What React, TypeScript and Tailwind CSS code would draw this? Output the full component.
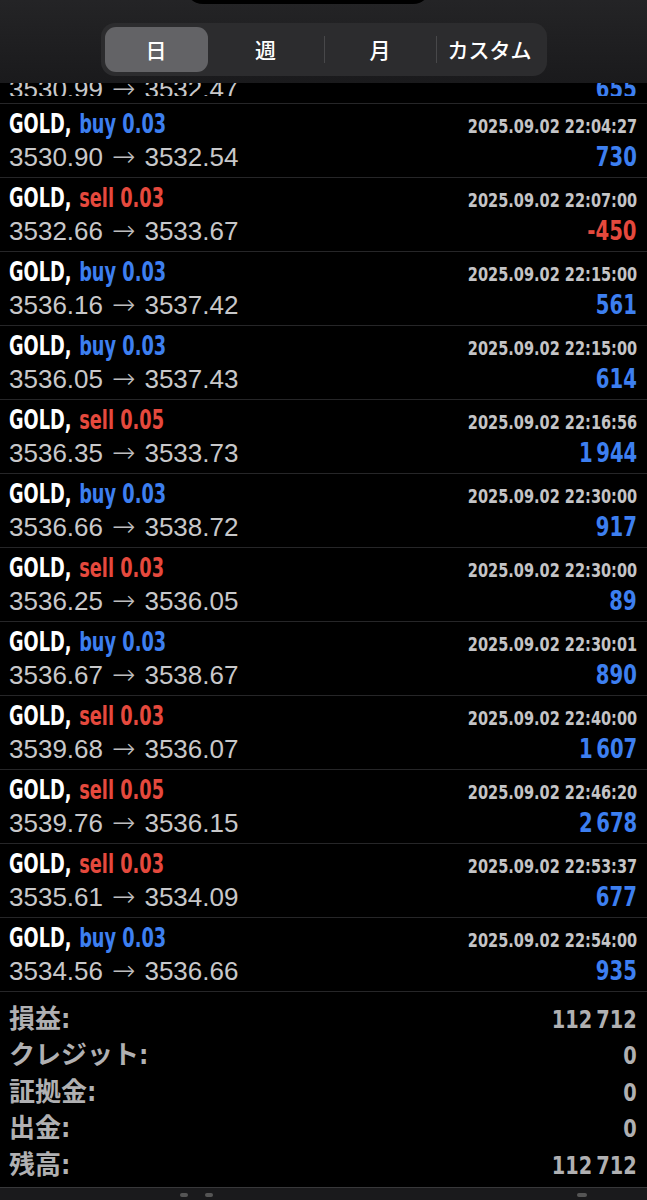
import React from "react";

const cond = {
  fontFamily:
    "'Liberation Sans Narrow', 'DejaVu Sans Condensed', 'Noto Sans CJK JP', sans-serif",
};
const thin = { fontFamily: "'Liberation Sans', Arial, sans-serif" };
const arrow = { fontFamily: "'DejaVu Sans', sans-serif" };

type Deal = {
  side: "buy" | "sell";
  lot: string;
  time: string;
  from: string;
  to: string;
  profit: string;
};

const deals: Deal[] = [
  { side: "buy", lot: "0.03", time: "22:04:27", from: "3530.90", to: "3532.54", profit: "730" },
  { side: "sell", lot: "0.03", time: "22:07:00", from: "3532.66", to: "3533.67", profit: "-450" },
  { side: "buy", lot: "0.03", time: "22:15:00", from: "3536.16", to: "3537.42", profit: "561" },
  { side: "buy", lot: "0.03", time: "22:15:00", from: "3536.05", to: "3537.43", profit: "614" },
  { side: "sell", lot: "0.05", time: "22:16:56", from: "3536.35", to: "3533.73", profit: "1 944" },
  { side: "buy", lot: "0.03", time: "22:30:00", from: "3536.66", to: "3538.72", profit: "917" },
  { side: "sell", lot: "0.03", time: "22:30:00", from: "3536.25", to: "3536.05", profit: "89" },
  { side: "buy", lot: "0.03", time: "22:30:01", from: "3536.67", to: "3538.67", profit: "890" },
  { side: "sell", lot: "0.03", time: "22:40:00", from: "3539.68", to: "3536.07", profit: "1 607" },
  { side: "sell", lot: "0.05", time: "22:46:20", from: "3539.76", to: "3536.15", profit: "2 678" },
  { side: "sell", lot: "0.03", time: "22:53:37", from: "3535.61", to: "3534.09", profit: "677" },
  { side: "buy", lot: "0.03", time: "22:54:00", from: "3534.56", to: "3536.66", profit: "935" },
];

const summary = [
  ["損益:", "112 712"],
  ["クレジット:", "0"],
  ["証拠金:", "0"],
  ["出金:", "0"],
  ["残高:", "112 712"],
];

function Segmented() {
  const seg = "h-[45px] flex items-center justify-center text-white text-[21px]";
  const jp = { fontFamily: "'Noto Sans CJK JP', sans-serif", fontWeight: 500 };
  return (
    <div className="relative h-[83px] bg-gradient-to-b from-[#242426] to-[#1a1a1c]">
      <div className="absolute left-[185px] top-[-20px] w-[246px] h-[24px] rounded-b-[18px] bg-black" />
      <div className="flex justify-center pt-[23px]">
        <div className="flex items-center h-[53px] w-[446px] rounded-[14px] bg-[#2c2c2e] px-[4px]">
          <div className={`${seg} w-[103px] rounded-[11px] bg-[#636366]`} style={jp}>
            日
          </div>
          <div className={`${seg} w-[116px]`} style={jp}>
            週
          </div>
          <div className="w-px h-[27px] bg-[#48484a]" />
          <div className={`${seg} w-[111px]`} style={jp}>
            月
          </div>
          <div className="w-px h-[27px] bg-[#48484a]" />
          <div className={`${seg} flex-1`} style={jp}>
            カスタム
          </div>
        </div>
      </div>
    </div>
  );
}

function Price({ from, to }: { from: string; to: string }) {
  return (
    <div className="text-[26px] leading-[30px] text-[#c8c8ca] whitespace-nowrap" style={thin}>
      {from}
      <span className="text-[28px] leading-none font-extralight mx-[9px] text-[#bdbdbf]" style={arrow}>
        →
      </span>
      {to}
    </div>
  );
}

function Row({ d }: { d: Deal }) {
  const sideColor = d.side === "buy" ? "text-[#3d7ff0]" : "text-[#e5493d]";
  const profitColor = d.profit.startsWith("-") ? "text-[#e5493d]" : "text-[#3d7ff0]";
  return (
    <div className="h-[74px] border-t border-[#262628] pl-[9px] pr-[10px] pt-[1px]">
      <div className="flex items-baseline justify-between h-[33px]">
        <div
          className="inline-block origin-left scale-x-[0.76] text-[26px] font-bold font-stretch-condensed whitespace-nowrap"
          style={cond}
        >
          <span className="text-white">GOLD,</span>
          <span className={`${sideColor} ml-[10px]`}>
            {d.side} {d.lot}
          </span>
        </div>
        <div
          className="inline-block origin-right scale-x-[0.85] text-[19px] font-bold font-stretch-condensed text-[#c4c4c6] whitespace-nowrap"
          style={cond}
        >
          2025.09.02 {d.time}
        </div>
      </div>
      <div className="flex items-baseline justify-between h-[34px]">
        <Price from={d.from} to={d.to} />
        <div
          className={`inline-block origin-right scale-x-[0.84] [word-spacing:-4px] text-[26px] font-bold font-stretch-condensed whitespace-nowrap ${profitColor}`}
          style={cond}
        >
          {d.profit}
        </div>
      </div>
    </div>
  );
}

export default function App() {
  return (
    <div className="w-[647px] h-[1200px] overflow-hidden bg-black">
      <Segmented />
      <div className="h-[20px] overflow-hidden flex items-end justify-between pl-[9px] pr-[10px] pb-[7px]">
        <div className="h-[13px] overflow-hidden flex items-end leading-[26px]">
          <span className="block -mb-[8px]">
            <Price from="3530.99" to="3532.47" />
          </span>
        </div>
        <div className="h-[13px] overflow-hidden flex items-end leading-[26px]">
          <span
            className="block -mb-[6px] origin-right scale-x-[0.84] text-[26px] font-bold font-stretch-condensed text-[#3d7ff0]"
            style={cond}
          >
            655
          </span>
        </div>
      </div>
      {deals.map((d, i) => (
        <Row key={i} d={d} />
      ))}
      <div className="border-t border-[#262628] pl-[9px] pr-[10px] pt-[9px] h-[196px]">
        {summary.map(([k, v]) => (
          <div
            key={k}
            className="flex justify-between items-center h-[36.5px] text-[25px] font-bold font-stretch-condensed text-[#b0b0b2]"
            style={cond}
          >
            <span className="text-[26px]">{k}</span>
            <span className="inline-block origin-right scale-x-[0.86] [word-spacing:-3px] whitespace-nowrap">
              {v}
            </span>
          </div>
        ))}
      </div>
      <div className="border-t border-[#38383a] bg-[#1a1a1c] h-[20px] relative">
        <div className="absolute left-[180px] top-[5px] w-[8px] h-[4px] rounded-full bg-[#555]" />
        <div className="absolute left-[205px] top-[5px] w-[8px] h-[4px] rounded-full bg-[#555]" />
        <div className="absolute left-[577px] top-[5px] w-[10px] h-[4px] rounded-full bg-[#555]" />
      </div>
    </div>
  );
}
